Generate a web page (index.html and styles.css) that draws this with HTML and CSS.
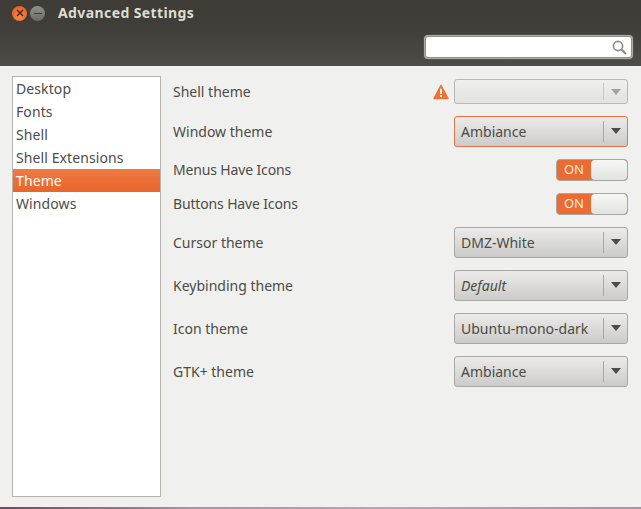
FILE: index.html
```html
<!DOCTYPE html>
<html lang="en">
<head>
  <meta charset="UTF-8">
  <title>Advanced Settings</title>
  <link rel="stylesheet" href="styles.css">
</head>
<body>
  <div class="window">
    <div class="header">
      <div class="titlebar">
        <span class="winbtn close">
          <svg width="8" height="8" viewBox="0 0 8 8"><path d="M1 1L7 7M7 1L1 7" stroke="#3a2418" stroke-width="1.3"/></svg>
        </span>
        <span class="winbtn mini"><i></i></span>
        <span class="title">Advanced Settings</span>
      </div>
      <div class="toolbar">
        <div class="search">
          <svg width="17" height="17" viewBox="0 0 17 17"><circle cx="7" cy="7" r="4.6" fill="none" stroke="#8c8c88" stroke-width="1.7"/><path d="M10.5 10.5L15 15" stroke="#8c8c88" stroke-width="2.2"/></svg>
        </div>
      </div>
    </div>
    <div class="content">
      <ul class="sidebar">
        <li>Desktop</li>
        <li>Fonts</li>
        <li>Shell</li>
        <li>Shell Extensions</li>
        <li class="selected">Theme</li>
        <li>Windows</li>
      </ul>
      <div class="settings">
        <div class="row row-small">
          <span>Shell theme</span>
          <div class="controls">
            <svg class="warn" width="16" height="16" viewBox="0 0 17 16"><path d="M8.5 1L16 15H1Z" fill="#ef7236" stroke="#ef7236" stroke-width="1.5" stroke-linejoin="round"/><path d="M8.5 4.5V10M8.5 11.3V13.3" stroke="#fff" stroke-width="2"/></svg>
            <div class="combo disabled"><span class="combo-text"></span><span class="arrow"></span></div>
          </div>
        </div>
        <div class="row">
          <span>Window theme</span>
          <div class="combo focused"><span class="combo-text">Ambiance</span><span class="arrow"></span></div>
        </div>
        <div class="row row-toggle">
          <span class="toggle-label">Menus Have Icons</span>
          <div class="toggle"><span class="toggle-on">ON</span><span class="toggle-knob"></span></div>
        </div>
        <div class="row row-toggle">
          <span class="toggle-label">Buttons Have Icons</span>
          <div class="toggle"><span class="toggle-on">ON</span><span class="toggle-knob"></span></div>
        </div>
        <div class="row">
          <span>Cursor theme</span>
          <div class="combo"><span class="combo-text">DMZ-White</span><span class="arrow"></span></div>
        </div>
        <div class="row">
          <span>Keybinding theme</span>
          <div class="combo"><span class="combo-text italic">Default</span><span class="arrow"></span></div>
        </div>
        <div class="row">
          <span>Icon theme</span>
          <div class="combo"><span class="combo-text">Ubuntu-mono-dark</span><span class="arrow"></span></div>
        </div>
        <div class="row">
          <span>GTK+ theme</span>
          <div class="combo"><span class="combo-text">Ambiance</span><span class="arrow"></span></div>
        </div>
      </div>
    </div>
    <div class="desktop-edge"></div>
  </div>
</body>
</html>
```

FILE: styles.css
```css
html, body {
  margin: 0;
  padding: 0;
}
body {
  width: 641px;
  height: 509px;
  overflow: hidden;
  font-family: "Noto Sans", "Open Sans", sans-serif;
  font-size: 14px;
  color: #4c4c47;
  background-color: #f0f0ee;
}
.window {
  display: flex;
  flex-direction: column;
  height: 509px;
}
.header {
  height: 66px;
  background: linear-gradient(to bottom, #3d3c37 0%, #3f3e39 40%, #4d4c46 100%);
  flex: none;
}
.titlebar {
  display: flex;
  align-items: center;
  height: 26px;
  padding-left: 12px;
  gap: 3px;
}
.winbtn {
  width: 15px;
  height: 15px;
  border-radius: 50%;
  display: flex;
  align-items: center;
  justify-content: center;
}
.close {
  background: radial-gradient(circle at 50% 70%, #f98a45, #e2561a);
}
.mini {
  background: linear-gradient(to bottom, #90908a, #6c6c66);
}
.mini i {
  width: 8px;
  height: 1px;
  background-color: #3c3c38;
}
.title {
  margin-left: 10px;
  margin-top: -2px;
  color: #dfdbd2;
  font-size: 14px;
  font-weight: 700;
  letter-spacing: 0.4px;
}
.toolbar {
  display: flex;
  justify-content: flex-end;
  padding: 10px 9px 0 0;
}
.search {
  width: 202px;
  height: 20px;
  background-color: #fff;
  border: 1px solid #8f8e88;
  border-radius: 3px;
  box-shadow: 0 0 1px 1px #b9b8b2;
  display: flex;
  align-items: center;
  justify-content: flex-end;
  padding-right: 3px;
}
.content {
  flex: 1;
  display: flex;
  padding: 10px 13px 0 12px;
  min-height: 0;
}
.sidebar {
  list-style: none;
  margin: 0 12px 10px 0;
  padding: 0;
  width: 147px;
  background-color: #fff;
  border: 1px solid #b5b4ae;
  flex: none;
  letter-spacing: 0.1px;
}
.sidebar li {
  height: 23px;
  line-height: 23px;
  padding-left: 3px;
}
.sidebar .selected {
  color: #fff;
  background: linear-gradient(to bottom, #f07a43, #e8652b);
}
.settings {
  flex: 1;
  display: flex;
  flex-direction: column;
  gap: 12px;
  padding-top: 3px;
}
.row {
  display: flex;
  align-items: center;
  justify-content: space-between;
  height: 31px;
}
.row-small {
  height: 25px;
}
.row-toggle {
  height: 22px;
}
.toggle-label {
  letter-spacing: -0.15px;
  margin-top: -2px;
}
.controls {
  display: flex;
  align-items: center;
  gap: 5px;
}
.warn {
  display: block;
}
.combo {
  width: 172px;
  height: 29px;
  display: flex;
  align-items: center;
  border: 1px solid #a8a7a1;
  border-radius: 3px;
  background: linear-gradient(to bottom, #ecebe9, #cbcbc9);
}
.row-small .combo {
  height: 23px;
}
.combo-text {
  flex: 1;
  padding-left: 6px;
}
.italic {
  font-style: italic;
}
.arrow {
  width: 23px;
  height: 70%;
  border-left: 1px solid #a8a7a1;
  display: flex;
  align-items: center;
  justify-content: center;
}
.arrow::after {
  content: "";
  border-left: 5px solid transparent;
  border-right: 5px solid transparent;
  border-top: 6px solid #4c4c47;
}
.disabled {
  background: linear-gradient(to bottom, #efefed, #e2e2df);
  border-color: #b9b8b3;
}
.disabled .arrow {
  border-left-color: #c6c5c0;
}
.disabled .arrow::after {
  border-top-color: #a3a39f;
}
.focused {
  border-color: #e9744a;
}
.toggle {
  width: 70px;
  height: 20px;
  display: flex;
  background-color: #ea6c32;
  border: 1px solid #a8a7a1;
  border-radius: 4px;
  overflow: hidden;
}
.toggle-on {
  width: 34px;
  color: #fbe9dd;
  font-size: 13px;
  line-height: 19px;
  text-align: center;
}
.toggle-knob {
  flex: 1;
  background: linear-gradient(to bottom, #f7f7f5, #e2e2df);
  border-radius: 4px;
}
.desktop-edge {
  height: 2px;
  flex: none;
  background: linear-gradient(to right, #6e4a62, #b48ca4 30%, #c4a0b2 60%, #b48ca4);
}
```
